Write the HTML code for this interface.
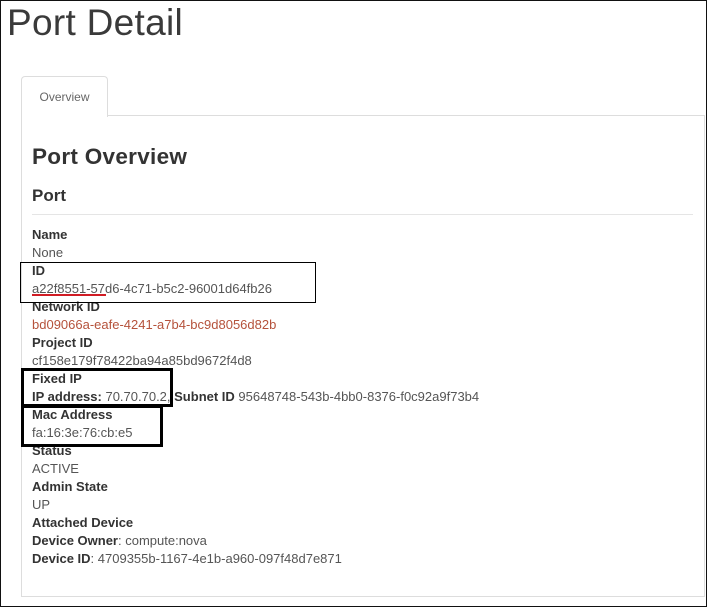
<!DOCTYPE html><html><head><style>
body{margin:0;width:707px;height:607px;overflow:hidden;background:#fff;font-family:"Liberation Sans",sans-serif;color:#333}
.frame{position:absolute;left:0;top:0;width:705px;height:605px;border:1px solid #111}
h1{position:absolute;left:7px;top:2px;margin:0;font-weight:300;font-size:37px;color:#3a3a3a;letter-spacing:0.3px}
.tab{position:absolute;left:21px;top:76px;width:85px;height:40px;border:1px solid #ddd;border-bottom:none;border-radius:4px 4px 0 0;background:#fff;font-size:12px;color:#666;text-align:center;line-height:41px;z-index:2}
.panel{position:absolute;left:21px;top:115px;width:682px;height:480px;border:1px solid #ddd}
h2{position:absolute;left:32px;top:144px;margin:0;font-size:22.5px;font-weight:bold;color:#333;letter-spacing:0.3px}
h3{position:absolute;left:32px;top:186px;margin:0;font-size:17px;font-weight:bold;color:#333}
.hr{position:absolute;left:32px;top:214px;width:661px;height:1px;background:#e5e5e5}
.list{position:absolute;left:32px;top:226px;font-size:13px;line-height:18px;color:#555}
.list b{color:#333}
.red{color:#b5523b}
.box{position:absolute;border:1px solid #000}
</style></head><body>
<div class="frame"></div>
<h1>Port Detail</h1>
<div class="panel"></div>
<div class="tab">Overview</div>
<h2>Port Overview</h2>
<h3>Port</h3>
<div class="hr"></div>
<div class="list">
<b>Name</b><br>None<br>
<b>ID</b><br>a22f8551-57d6-4c71-b5c2-96001d64fb26<br>
<b>Network ID</b><br><span class="red">bd09066a-eafe-4241-a7b4-bc9d8056d82b</span><br>
<b>Project ID</b><br>cf158e179f78422ba94a85bd9672f4d8<br>
<b>Fixed IP</b><br><b>IP address:</b> 70.70.70.2, <b>Subnet ID</b> 95648748-543b-4bb0-8376-f0c92a9f73b4<br>
<b>Mac Address</b><br>fa:16:3e:76:cb:e5<br>
<b>Status</b><br>ACTIVE<br>
<b>Admin State</b><br>UP<br>
<b>Attached Device</b><br>
<b>Device Owner</b>: compute:nova<br>
<b>Device ID</b>: 4709355b-1167-4e1b-a960-097f48d7e871
</div>
<div class="box" style="left:20px;top:262px;width:294px;height:39px"></div>
<div style="position:absolute;left:32px;top:294px;width:74px;height:2px;background:#d01c24"></div>
<div class="box" style="left:21px;top:368px;width:146px;height:33px;border-width:3px"></div>
<div class="box" style="left:21px;top:405px;width:136px;height:36px;border-width:3px"></div>
</body></html>
